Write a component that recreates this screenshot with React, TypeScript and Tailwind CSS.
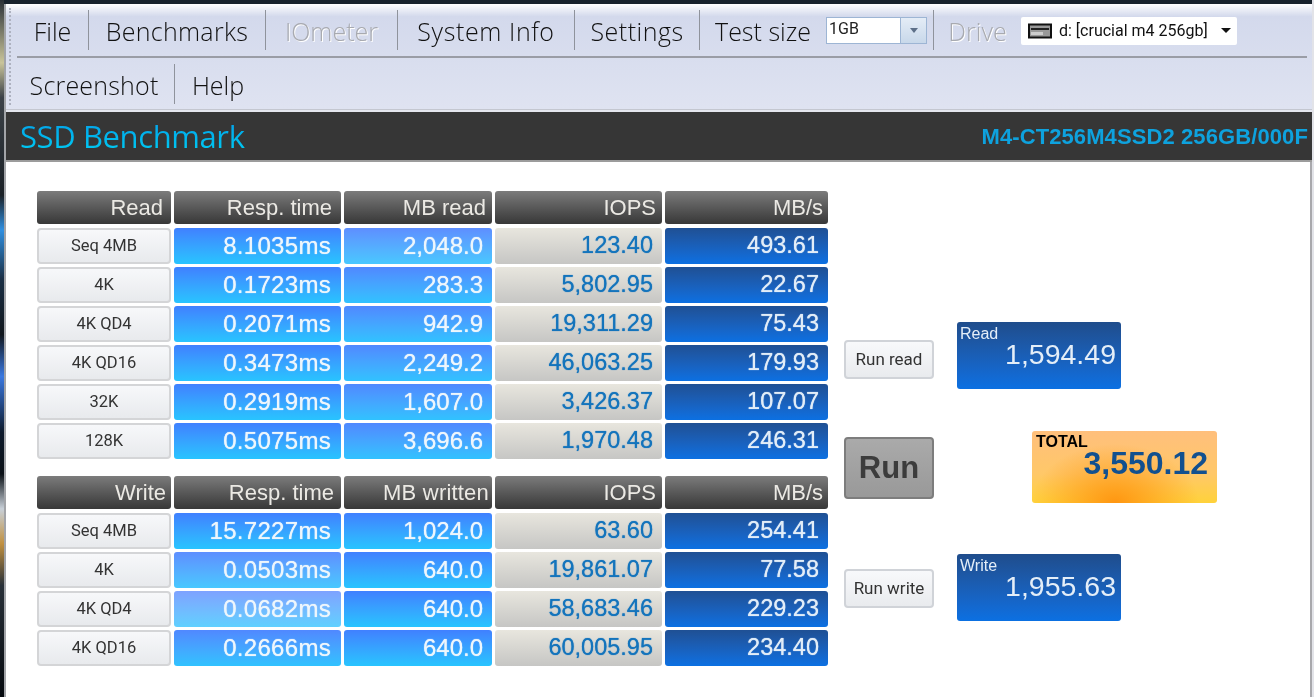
const DEEP = "from-[#4080ff] to-[#28c4ff]";
const MID = "from-[#5088ff] to-[#30c2ff]";
const SOFT = "from-[#5e8eff] to-[#48c8ff]";
const PALE = "from-[#7ea2ff] to-[#60d0ff]";

type Row = { label: string; resp: string; respTone: string; mb: string; mbTone: string; iops: string; speed: string };

const readRows: Row[] = [
  { label: "Seq 4MB", resp: "8.1035ms", respTone: DEEP, mb: "2,048.0", mbTone: SOFT, iops: "123.40", speed: "493.61" },
  { label: "4K", resp: "0.1723ms", respTone: DEEP, mb: "283.3", mbTone: MID, iops: "5,802.95", speed: "22.67" },
  { label: "4K QD4", resp: "0.2071ms", respTone: DEEP, mb: "942.9", mbTone: MID, iops: "19,311.29", speed: "75.43" },
  { label: "4K QD16", resp: "0.3473ms", respTone: DEEP, mb: "2,249.2", mbTone: MID, iops: "46,063.25", speed: "179.93" },
  { label: "32K", resp: "0.2919ms", respTone: DEEP, mb: "1,607.0", mbTone: MID, iops: "3,426.37", speed: "107.07" },
  { label: "128K", resp: "0.5075ms", respTone: DEEP, mb: "3,696.6", mbTone: MID, iops: "1,970.48", speed: "246.31" },
];

const writeRows: Row[] = [
  { label: "Seq 4MB", resp: "15.7227ms", respTone: DEEP, mb: "1,024.0", mbTone: DEEP, iops: "63.60", speed: "254.41" },
  { label: "4K", resp: "0.0503ms", respTone: SOFT, mb: "640.0", mbTone: DEEP, iops: "19,861.07", speed: "77.58" },
  { label: "4K QD4", resp: "0.0682ms", respTone: PALE, mb: "640.0", mbTone: DEEP, iops: "58,683.46", speed: "229.23" },
  { label: "4K QD16", resp: "0.2666ms", respTone: MID, mb: "640.0", mbTone: DEEP, iops: "60,005.95", speed: "234.40" },
];

function Head({ text, pad }: { text: string; pad: string }) {
  return (
    <div className={`h-[33px] flex items-center justify-end rounded-[3px] bg-linear-to-b from-[#7c7c7c] to-[#383838] text-[22px] text-[#ebe9e4] font-['Liberation_Sans',sans-serif] ${pad}`}>
      {text}
    </div>
  );
}

function Value({ text, tone, color }: { text: string; tone: string; color: string }) {
  return (
    <div className={`h-[36px] flex items-center justify-end rounded-[3px] bg-linear-to-b [text-shadow:0_0_1px_currentColor] font-['Liberation_Sans',sans-serif] ${tone} ${color}`}>
      {text}
    </div>
  );
}

const cols = "grid grid-cols-[134px_167px_148px_167px_163px] gap-x-[3px]";

function Table({ title, mbTitle, rows, mbPad, titlePad, respPad }: { title: string; mbTitle: string; rows: Row[]; mbPad: string; titlePad: string; respPad: string }) {
  return (
    <div className="flex flex-col gap-[4px]">
      <div className={cols}>
        <Head text={title} pad={titlePad} />
        <Head text="Resp. time" pad={respPad} />
        <Head text={mbTitle} pad={mbPad} />
        <Head text="IOPS" pad="pr-[6px]" />
        <Head text="MB/s" pad="pr-[5px]" />
      </div>
      <div className={`${cols} gap-y-[3px]`}>
        {rows.map((r) => (
          <div key={r.label} className="contents">
            <div className="h-[36px] flex items-center justify-center rounded-[4px] border-2 border-[#d4d5d7] bg-linear-to-b from-[#f7f8fa] to-[#e8eaed] text-[16.5px] text-[#333] font-['Roboto',sans-serif]">
              {r.label}
            </div>
            <Value text={r.resp} tone={r.respTone} color="text-[24px] pr-[10px] text-[#eef6fc] tracking-[0.3px]" />
            <Value text={r.mb} tone={r.mbTone} color="text-[24px] pr-[9px] text-[#eef6fc]" />
            <Value text={r.iops} tone="from-[#e8e6de] to-[#c6c6c4]" color="text-[23.5px] pr-[9px] text-[#1474bc]" />
            <Value text={r.speed} tone="from-[#1f5094] to-[#0b70e2]" color="text-[23.5px] pr-[9px] text-[#e2edf8]" />
          </div>
        ))}
      </div>
    </div>
  );
}

function RunButton({ text }: { text: string }) {
  return (
    <button className="w-[90px] h-[39px] shrink-0 rounded-[4px] border-2 border-[#d0d3d8] bg-linear-to-b from-[#f8f9fb] to-[#e9ebee] text-[17px] text-[#333] font-['Roboto',sans-serif]">
      {text}
    </button>
  );
}

function ScoreBox({ label, value }: { label: string; value: string }) {
  return (
    <div className="w-[164px] h-[67px] ml-[23px] rounded-[3px] bg-linear-to-b from-[#1f4d8c] to-[#0b70e2] px-[3px] pt-[3px] text-[#e4eef8] font-['Liberation_Sans',sans-serif]">
      <div className="text-[16px] leading-[17px]">{label}</div>
      <div className="text-right pr-[2px] text-[28.5px] leading-[27px] -mt-[1px]">{value}</div>
    </div>
  );
}

function Sep() {
  return <div className="w-px h-[40px] bg-[#8f939c] shrink-0" />;
}

function MenuItem({ text, width, muted }: { text: string; width: string; muted?: boolean }) {
  return (
    <div className={`flex items-center justify-center h-[40px] pt-[4px] text-[25px] font-light font-['Open_Sans',sans-serif] ${width} ${muted ? "text-[#a8aab0] [text-shadow:1px_1px_0_#ffffff]" : "text-[#111]"}`}>
      {text}
    </div>
  );
}

export default function App() {
  return (
    <div className="w-[1314px] h-[697px] overflow-hidden flex bg-[#0b1118] blur-[0.5px]">
      {/* desktop wallpaper showing at the left edge */}
      <div className="w-[4px] shrink-0 bg-[linear-gradient(180deg,#2a3036_0%,#c9c49a_9%,#3c4248_14%,#1a2026_28%,#2f8fe0_33%,#1a2f45_40%,#10161c_48%,#3a78e0_54%,#0d1a2c_62%,#0a1016_68%,#c8d0d8_73%,#c09040_78%,#283038_84%,#05090e_100%)]" />
      <div className="flex-1 flex flex-col min-w-0">
        <div className="h-[4px] bg-[#18222c] shrink-0" />
        <div className="flex-1 flex flex-col border-l-2 border-[#a2a4a8] bg-white">
          {/* toolbar */}
          <div className="h-[106px] shrink-0 flex bg-linear-to-b from-[#ffffff] via-[#d3d9ec] via-[12%] to-[#dfe3f1] border-b border-[#c4c7d0] relative">
            <div className="absolute left-[3px] top-[4px] bottom-[4px] border-l-2 border-dotted border-[#aeb2c0]" />
            <div className="flex-1 flex flex-col pl-[11px] pr-[5px]">
              <div className="h-[54px] flex items-center border-b-2 border-[#9a9da6] shrink-0">
                <MenuItem text="File" width="w-[71px]" />
                <Sep />
                <MenuItem text="Benchmarks" width="w-[176px] tracking-[0.3px]" />
                <Sep />
                <MenuItem text="IOmeter" width="w-[131px]" muted />
                <Sep />
                <MenuItem text="System Info" width="w-[176px] tracking-[0.6px]" />
                <Sep />
                <MenuItem text="Settings" width="w-[124px] tracking-[0.5px]" />
                <Sep />
                <MenuItem text="Test size" width="w-[126px]" />
                <div className="w-[101px] h-[27px] mt-[1px] flex shrink-0 border border-[#9db5d4] bg-white">
                  <div className="flex-1 text-[16px] leading-[22px] pl-[2px] text-[#222] font-['Roboto',sans-serif]">1GB</div>
                  <div className="w-[26px] flex items-center justify-center border-l border-[#9db5d4] bg-linear-to-b from-[#e4ecf6] to-[#c8d8ea]">
                    <div className="w-0 h-0 border-l-[4px] border-r-[4px] border-t-[5px] border-l-transparent border-r-transparent border-t-[#5d6f88]" />
                  </div>
                </div>
                <div className="w-[6px] shrink-0" />
                <Sep />
                <MenuItem text="Drive" width="w-[87px]" muted />
                <div className="w-[216px] h-[28px] mt-[1px] flex items-center shrink-0 rounded-[2px] bg-white pl-[7px] text-[#111]">
                  <svg width="24" height="16" viewBox="0 0 24 16">
                    <rect x="1" y="1.5" width="22" height="13" fill="#999" stroke="#111" strokeWidth="2" />
                    <rect x="3" y="5" width="18" height="2" fill="#222" />
                    <rect x="3" y="9" width="12" height="3" fill="#ccc" />
                  </svg>
                  <span className="ml-[7px] text-[16px] font-['Roboto',sans-serif] whitespace-nowrap">d: [crucial m4 256gb]</span>
                  <div className="ml-[13px] w-0 h-0 border-l-[5px] border-r-[5px] border-t-[5px] border-l-transparent border-r-transparent border-t-[#111]" />
                </div>
              </div>
              <div className="flex-1 flex items-center">
                <MenuItem text="Screenshot" width="w-[157px] pr-[3px] tracking-[0.2px]" />
                <Sep />
                <MenuItem text="Help" width="w-[86px]" />
              </div>
            </div>
          </div>
          <div className="h-[2px] shrink-0 bg-[#e4e6ee]" />
          {/* title bar */}
          <div className="h-[50px] shrink-0 flex items-center justify-between bg-[#363636] border-b-2 border-[#9c9c9c] pl-[14px] pr-[4px]">
            <span className="text-[31px] tracking-[-0.4px] bg-linear-to-b from-[#0a96e6] to-[#00d4f4] bg-clip-text text-transparent font-['Open_Sans',sans-serif]">SSD Benchmark</span>
            <span className="text-[22px] tracking-[0.1px] font-bold text-[#0ea2de] font-['Liberation_Sans',sans-serif]">M4-CT256M4SSD2 256GB/000F</span>
          </div>
          {/* results */}
          <div className="flex-1 flex border-r-2 border-[#a8a8ac] pl-[31px] pt-[29px]">
            <div className="w-[791px] shrink-0 flex flex-col gap-[17px]">
              <Table title="Read" mbTitle="MB read" rows={readRows} titlePad="pr-[8px]" respPad="pr-[9px]" mbPad="pr-[6px]" />
              <Table title="Write" mbTitle="MB written" rows={writeRows} titlePad="pr-[5px]" respPad="pr-[7px]" mbPad="pr-[3px] tracking-[0.2px]" />
            </div>
            <div className="ml-[16px] flex flex-col pt-[131px]">
              <div className="flex items-end">
                <div className="mb-[10px]"><RunButton text="Run read" /></div>
                <ScoreBox label="Read" value="1,594.49" />
              </div>
              <div className="flex items-start mt-[42px]">
                <button className="w-[90px] h-[62px] mt-[6px] shrink-0 rounded-[4px] border-2 border-[#7d7d7d] bg-linear-to-b from-[#aaaaaa] to-[#999999] text-[31px] font-bold text-[#3c3c3c] font-['Liberation_Sans',sans-serif]">
                  Run
                </button>
                <div className="w-[185px] h-[72px] ml-[98px] rounded-[3px] px-[4px] pt-[3px] bg-[radial-gradient(ellipse_at_45%_100%,#ff9612_0%,#ff961200_58%),linear-gradient(180deg,#ffbf7c_0%,#ffc868_60%,#ffd23a_100%)]">
                  <div className="text-[16px] leading-[16px] font-bold text-black font-['Liberation_Sans',sans-serif]">TOTAL</div>
                  <div className="text-right pr-[5px] text-[32px] leading-[30px] -mt-[2px] font-bold text-[#12508f] font-['Liberation_Sans',sans-serif]">3,550.12</div>
                </div>
              </div>
              <div className="flex items-end mt-[51px]">
                <div className="mb-[13px]"><RunButton text="Run write" /></div>
                <ScoreBox label="Write" value="1,955.63" />
              </div>
            </div>
          </div>
        </div>
      </div>
      <div className="w-[2px] shrink-0 bg-[#e2e3e8]" />
    </div>
  );
}
